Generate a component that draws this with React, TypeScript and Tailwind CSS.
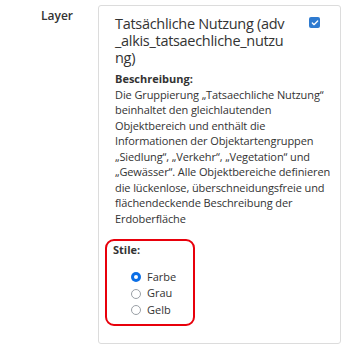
import { Check } from "lucide-react";

const descriptionLines = [
  "Die Gruppierung „Tatsaechliche Nutzung“",
  "beinhaltet den gleichlautenden",
  "Objektbereich und enthält die",
  "Informationen der Objektartengruppen",
  "„Siedlung“, „Verkehr“, „Vegetation“ und",
  "„Gewässer“. Alle Objektbereiche definieren",
  "die lückenlose, überschneidungsfreie und",
  "flächendeckende Beschreibung der",
  "Erdoberfläche",
];

const styles = [
  { id: "farbe", label: "Farbe", checked: true },
  { id: "grau", label: "Grau", checked: false },
  { id: "gelb", label: "Gelb", checked: false },
];

function Radio({ checked }: { checked: boolean }) {
  return checked ? (
    <span className="flex h-[10px] w-[10px] items-center justify-center rounded-full bg-[#0b6fe6]">
      <span className="h-[4px] w-[4px] rounded-full bg-white" />
    </span>
  ) : (
    <span className="h-[10px] w-[10px] rounded-full border border-[#9aa0a6] bg-white" />
  );
}

export default function App() {
  return (
    <div className="flex min-h-[344px] bg-white pt-[5px] font-['Open_Sans',sans-serif] text-[#333]">
      <div className="w-[98px] shrink-0 pr-[25px] pt-[3px] text-right text-[12px] font-semibold leading-[16px]">
        Layer
      </div>

      <div className="w-[243px] shrink-0 rounded-[3px] border border-[#dcdcdc] px-[16px] pt-[9px] pb-[12px]">
        <div className="flex items-start justify-between">
          <h4 className="whitespace-nowrap text-[14.5px] leading-[17px] tracking-[-0.3px]">
            Tatsächliche Nutzung (adv
            <br />
            _alkis_tatsaechliche_nutzu
            <br />
            ng)
          </h4>
          <span className="mr-[4px] mt-[2px] flex h-[11px] w-[11px] items-center justify-center rounded-[2px] bg-[#2f7bd0]">
            <Check size={8} strokeWidth={4} className="text-white" />
          </span>
        </div>

        <p className="mt-[5px] text-[11px] font-bold leading-[15.5px]">
          Beschreibung:
        </p>
        <p className="whitespace-nowrap text-[11px] leading-[15.5px] tracking-[-0.1px]">
          {descriptionLines.map((line, i) => (
            <span key={i} className="block">
              {line}
            </span>
          ))}
        </p>

        <div className="ml-[-10px] mt-[13px] h-[87px] w-[90px] rounded-[9px] border-2 border-[#e8000b] px-[6px] pt-[1px]">
          <p className="text-[11px] font-bold leading-[15.5px]">Stile:</p>
          <div className="mt-[11px] pl-[18px]">
            {styles.map((s) => (
              <label
                key={s.id}
                className="flex h-[16.7px] items-center gap-[6px] text-[11px]"
              >
                <Radio checked={s.checked} />
                {s.label}
              </label>
            ))}
          </div>
        </div>
      </div>
    </div>
  );
}
